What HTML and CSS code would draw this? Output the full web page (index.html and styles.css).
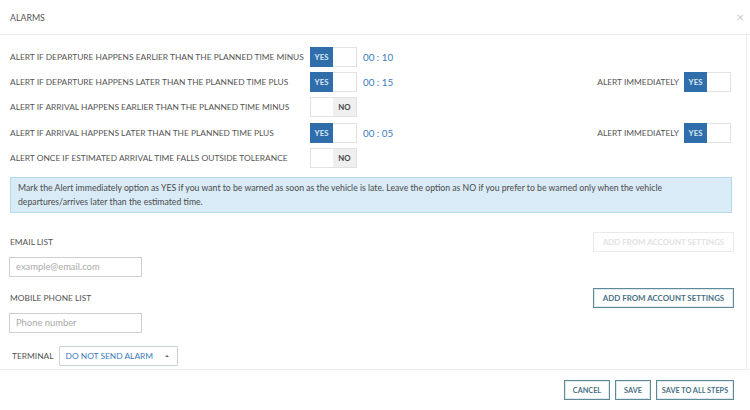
FILE: index.html
```html
<!DOCTYPE html>
<html>
<head>
<meta charset="utf-8">
<link rel="stylesheet" href="styles.css">
</head>
<body>
<div class="modal">
  <div class="header">
    <span class="title">ALARMS</span>
    <span class="close">×</span>
  </div>
  <div class="body">
    <div class="row">
      <span class="label">ALERT IF DEPARTURE HAPPENS EARLIER THAN THE PLANNED TIME MINUS</span>
      <span class="toggle on"><span class="yes">YES</span><span class="blank"></span></span>
      <span class="time">00 : 10</span>
    </div>
    <div class="row">
      <span class="label">ALERT IF DEPARTURE HAPPENS LATER THAN THE PLANNED TIME PLUS</span>
      <span class="toggle on"><span class="yes">YES</span><span class="blank"></span></span>
      <span class="time">00 : 15</span>
      <span class="imm"><span class="imm-label">ALERT IMMEDIATELY</span><span class="toggle on"><span class="yes">YES</span><span class="blank"></span></span></span>
    </div>
    <div class="row">
      <span class="label">ALERT IF ARRIVAL HAPPENS EARLIER THAN THE PLANNED TIME MINUS</span>
      <span class="toggle off"><span class="blank"></span><span class="no">NO</span></span>
    </div>
    <div class="row">
      <span class="label">ALERT IF ARRIVAL HAPPENS LATER THAN THE PLANNED TIME PLUS</span>
      <span class="toggle on"><span class="yes">YES</span><span class="blank"></span></span>
      <span class="time">00 : 05</span>
      <span class="imm"><span class="imm-label">ALERT IMMEDIATELY</span><span class="toggle on"><span class="yes">YES</span><span class="blank"></span></span></span>
    </div>
    <div class="row">
      <span class="label">ALERT ONCE IF ESTIMATED ARRIVAL TIME FALLS OUTSIDE TOLERANCE</span>
      <span class="toggle off"><span class="blank"></span><span class="no">NO</span></span>
    </div>

    <div class="info">Mark the Alert immediately option as YES if you want to be warned as soon as the vehicle is late. Leave the option as NO if you prefer to be warned only when the vehicle departures/arrives later than the estimated time.</div>

    <div class="list-row email-row">
      <span class="section-label">EMAIL LIST</span>
      <span class="btn disabled">ADD FROM ACCOUNT SETTINGS</span>
    </div>
    <div class="input">example@email.com</div>

    <div class="list-row phone-row">
      <span class="section-label">MOBILE PHONE LIST</span>
      <span class="btn">ADD FROM ACCOUNT SETTINGS</span>
    </div>
    <div class="input">Phone number</div>

    <div class="terminal-row">
      <span class="section-label">TERMINAL</span>
      <span class="select"><span>DO NOT SEND ALARM</span><span class="caret"></span></span>
    </div>
  </div>
  <div class="footer">
    <span class="btn cancel">CANCEL</span>
    <span class="btn save">SAVE</span>
    <span class="btn save-all">SAVE TO ALL STEPS</span>
  </div>
</div>
</body>
</html>
```
FILE: styles.css
```css
html, body {
  margin: 0;
  padding: 0;
  background: #fff;
}
body {
  font-family: Lato, "Open Sans", sans-serif;
  color: #555;
  width: 750px;
  height: 410px;
  overflow: hidden;
}
.modal {
  width: 750px;
}
.header {
  height: 35px;
  box-sizing: border-box;
  border-bottom: 1px solid #ececec;
  display: flex;
  align-items: center;
  justify-content: space-between;
  padding: 0 6px 0 10px;
}
.title {
  font-size: 8.8px;
  color: #555;
}
.close {
  font-size: 13px;
  color: #c8c8c8;
  line-height: 1;
}
.body {
  width: 747px;
  box-sizing: border-box;
  border-right: 1px solid #ededed;
  padding: 12px 15px 3px 10px;
  height: 334px;
}
.row {
  display: flex;
  align-items: center;
  height: 20px;
  margin-bottom: 5.2px;
}
.label {
  width: 300px;
  font-size: 8.4px;
  color: #555;
  white-space: nowrap;
}
.toggle {
  display: flex;
  width: 47px;
  height: 20px;
  box-sizing: border-box;
  border: 1px solid #e2e2e2;
  font-size: 7.8px;
  font-weight: bold;
}
.toggle .yes {
  width: 23px;
  background: #2f6eab;
  color: #d9e6f2;
  display: flex;
  align-items: center;
  justify-content: center;
  margin: -1px 0 -1px -1px;
}
.toggle .blank {
  flex: 1;
  background: #fff;
}
.toggle .no {
  width: 23px;
  background: #efefef;
  color: #444;
  display: flex;
  align-items: center;
  justify-content: center;
}
.time {
  margin-left: 6px;
  font-size: 9.8px;
  color: #3b7bbd;
}
.imm {
  margin-left: auto;
  display: flex;
  align-items: center;
  gap: 5px;
}
.imm-label {
  font-size: 8.4px;
  color: #555;
}
.info {
  margin-top: 9px;
  background: #d9ebf7;
  border: 1px solid #b4d8ec;
  font-size: 8.7px;
  line-height: 14px;
  color: #4a4a4a;
  padding: 3px 7px 3px 7px;
  width: 722px;
  box-sizing: border-box;
  height: 36px;
}
.list-row {
  display: flex;
  align-items: center;
  justify-content: space-between;
  height: 20px;
  width: 724px;
}
.email-row {
  margin-top: 19px;
}
.phone-row {
  margin-top: 11px;
}
.section-label {
  font-size: 8.4px;
  color: #555;
}
.btn {
  display: inline-flex;
  align-items: center;
  justify-content: center;
  height: 20px;
  box-sizing: border-box;
  border: 1px solid #5f8a99;
  color: #4a7184;
  font-size: 7.9px;
  font-weight: bold;
  padding: 0 6px;
  white-space: nowrap;
  box-shadow: 0 0 0 1px #dfe9ec inset;
}
.btn.disabled {
  border-color: #eaeaea;
  color: #e2e2e2;
  box-shadow: none;
}
.list-row .btn {
  width: 141px;
  padding: 0;
}
.input {
  margin-top: 5px;
  width: 133px;
  height: 20px;
  box-sizing: border-box;
  border: 1px solid #cfcfcf;
  font-size: 9.4px;
  color: #aaa;
  display: flex;
  align-items: center;
  padding-left: 6px;
  margin-left: -1px;
}
.terminal-row {
  margin-top: 13px;
  display: flex;
  align-items: center;
  gap: 5px;
  padding-left: 2px;
}
.select {
  width: 119px;
  height: 20px;
  box-sizing: border-box;
  border: 1px solid #c9d3d8;
  display: flex;
  align-items: center;
  justify-content: space-between;
  padding: 0 8px 0 6px;
  font-size: 8.4px;
  color: #3b7bbd;
}
.caret {
  width: 0;
  height: 0;
  border-left: 2px solid transparent;
  border-right: 2px solid transparent;
  border-bottom: 2px solid #4a7184;
}
.footer {
  border-top: 1px solid #ececec;
  display: flex;
  justify-content: flex-end;
  gap: 5px;
  padding: 10px 16px 0 0;
}
.footer .btn {
  font-size: 7.3px;
  padding: 0;
}
.footer .cancel {
  width: 46px;
}
.footer .save {
  width: 36px;
}
.footer .save-all {
  width: 78px;
}
```
